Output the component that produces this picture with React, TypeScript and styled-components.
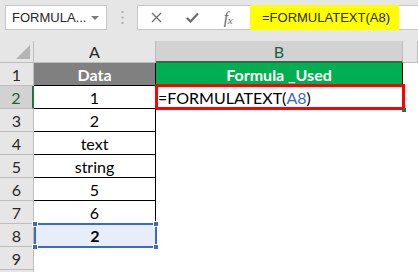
import * as React from 'react'
import styled, { createGlobalStyle, css } from 'styled-components'

const GlobalStyle = createGlobalStyle`
  body {
    margin: 0;
    background: #fff;
  }
  * {
    box-sizing: border-box;
  }
`

const Page = styled.div`
  width: 418px;
  height: 272px;
  overflow: hidden;
  background: #fff;
  font-family: Lato, "Liberation Sans", sans-serif;
`

const Toolbar = styled.div`
  height: 41px;
  background: #e6e6e6;
  display: flex;
  align-items: flex-start;
  padding: 5px 0 0 5px;
  font-family: "Liberation Sans", Arial, sans-serif;
`

const NameBox = styled.div`
  width: 102px;
  height: 25px;
  background: #fff;
  border: 1px solid #c6c6c6;
  display: flex;
  align-items: center;
  padding: 0 7px 0 6px;
  font-size: 13px;
  color: #262626;
`

const Caret = styled.span`
  margin-left: auto;
  width: 0;
  height: 0;
  border-left: 4px solid transparent;
  border-right: 4px solid transparent;
  border-top: 4px solid #7a7a7a;
`

const Splitter = styled.div`
  width: 30px;
  height: 25px;
  display: flex;
  align-items: center;
  justify-content: center;
`

const FormulaBox = styled.div`
  flex: 1;
  height: 25px;
  background: #fff;
  border: 1px solid #c6c6c6;
  border-right: none;
  display: flex;
  align-items: center;
`

const IconButton = styled.div`
  width: 36px;
  height: 100%;
  display: flex;
  align-items: center;
  justify-content: center;
  color: #6a6a6a;
`

const FxLabel = styled.span`
  font-family: "Liberation Serif", serif;
  font-style: italic;
  font-size: 16px;
  color: #6a6a6a;
  letter-spacing: -0.5px;

  sub {
    font-size: 11px;
    vertical-align: -1px;
  }
`

const FormulaText = styled.div`
  margin-left: 4px;
  width: 149px;
  height: 25px;
  margin-top: -1px;
  background: #ffff00;
  display: flex;
  align-items: center;
  padding-left: 12px;
  font-size: 13px;
  color: #262626;
`

const Sheet = styled.div`
  display: grid;
  grid-template-columns: 34px 122px 247px 1fr;
  grid-template-rows: 22px repeat(10, 23px);
`

const Corner = styled.div`
  background: #e6e6e6;
  border-right: 1px solid #bdbdbd;
  border-bottom: 1px solid #bdbdbd;
  display: flex;
  align-items: flex-end;
  justify-content: flex-end;
  padding: 0 3px 3px 0;
`

const ColHeader = styled.div<{ $active?: boolean }>`
  background: #e6e6e6;
  border-right: 1px solid #bdbdbd;
  border-bottom: 1px solid #bdbdbd;
  display: flex;
  align-items: center;
  justify-content: center;
  font-size: 16px;
  color: #262626;
  ${p => p.$active && css`
    background: #d2d2d2;
    border-bottom: 2px solid #217346;
    color: #1d5f3b;
  `}
`

const RowHeader = styled.div<{ $active?: boolean }>`
  background: #e6e6e6;
  border-right: 1px solid #bdbdbd;
  border-bottom: 1px solid #bdbdbd;
  display: flex;
  align-items: center;
  justify-content: center;
  font-size: 16px;
  color: #262626;
  ${p => p.$active && css`
    background: #d2d2d2;
    border-right: 2px solid #217346;
    color: #1d5f3b;
  `}
`

const Cell = styled.div<{ $fill?: string; $bold?: boolean; $boxed?: boolean; $align?: string }>`
  position: relative;
  display: flex;
  align-items: center;
  justify-content: ${p => p.$align || 'center'};
  font-size: 16px;
  color: ${p => (p.$fill ? '#fff' : '#000')};
  background: ${p => p.$fill || '#fff'};
  font-weight: ${p => (p.$bold ? 700 : 400)};
  ${p => p.$boxed && css`
    border-right: 1px solid #000;
    border-bottom: 1px solid #000;
  `}
`

const Blank = styled.div``

const ActiveFrame = styled.div`
  position: absolute;
  left: -1px;
  top: -2px;
  right: -2px;
  bottom: -1px;
  border: 3px solid #ff0000;
  pointer-events: none;
`

const FillHandle = styled.div`
  position: absolute;
  right: -3px;
  bottom: -3px;
  width: 4px;
  height: 4px;
  background: #217346;
`

const RefFrame = styled.div`
  position: absolute;
  left: 0;
  top: -1px;
  right: -1px;
  bottom: -1px;
  border: 2px solid #3a6cc6;
  pointer-events: none;
`

const Handle = styled.div<{ $x: 'left' | 'right'; $y: 'top' | 'bottom' }>`
  position: absolute;
  ${p => p.$x}: -4px;
  ${p => p.$y}: -4px;
  width: 6px;
  height: 6px;
  background: #3a6cc6;
  border: 1px solid #fff;
`

const RefText = styled.span`
  color: #3a6cc6;
`

const data = ['1', '2', 'text', 'string', '5', '6', '2']

export default function App() {
  return (
    <Page>
      <GlobalStyle />
      <Toolbar>
        <NameBox>
          FORMULA...
          <Caret />
        </NameBox>
        <Splitter>
          <svg width="3" height="13" viewBox="0 0 3 13">
            <rect x="0.5" y="0" width="2" height="2" fill="#b0b0b0" />
            <rect x="0.5" y="5.5" width="2" height="2" fill="#b0b0b0" />
            <rect x="0.5" y="11" width="2" height="2" fill="#b0b0b0" />
          </svg>
        </Splitter>
        <FormulaBox>
          <IconButton>
            <svg width="11" height="11" viewBox="0 0 11 11">
              <path d="M1 1 L10 10 M10 1 L1 10" stroke="#707070" strokeWidth="1.4" />
            </svg>
          </IconButton>
          <IconButton>
            <svg width="13" height="11" viewBox="0 0 13 11">
              <path d="M1 6 L4.5 9.5 L12 1.5" stroke="#6a6a6a" strokeWidth="2.2" fill="none" />
            </svg>
          </IconButton>
          <IconButton>
            <FxLabel>f<sub>x</sub></FxLabel>
          </IconButton>
          <FormulaText>=FORMULATEXT(A8)</FormulaText>
        </FormulaBox>
      </Toolbar>

      <Sheet>
        <Corner>
          <svg width="14" height="14" viewBox="0 0 14 14">
            <path d="M14 0 L14 14 L0 14 Z" fill="#b4b4b4" />
          </svg>
        </Corner>
        <ColHeader>A</ColHeader>
        <ColHeader $active>B</ColHeader>
        <ColHeader />

        <RowHeader>1</RowHeader>
        <Cell $boxed $fill="#808080" $bold>Data</Cell>
        <Cell $boxed $fill="#00b050" $bold>Formula _Used</Cell>
        <Blank />

        {data.map((v, i) => {
          const row = i + 2
          const isRef = row === 8
          return (
            <React.Fragment key={row}>
              <RowHeader $active={row === 2}>{row}</RowHeader>
              <Cell
                $boxed={!isRef}
                $bold={isRef}
                $fill={isRef ? '#e8eef9' : undefined}
                style={isRef ? { color: '#000' } : undefined}
              >
                {v}
                {isRef && (
                  <RefFrame>
                    <Handle $x="left" $y="top" />
                    <Handle $x="right" $y="top" />
                    <Handle $x="left" $y="bottom" />
                    <Handle $x="right" $y="bottom" />
                  </RefFrame>
                )}
              </Cell>
              {row === 2 ? (
                <Cell $align="flex-start" style={{ paddingLeft: 2 }}>
                  =FORMULATEXT(<RefText>A8</RefText>)
                  <ActiveFrame />
                  <FillHandle />
                </Cell>
              ) : (
                <Blank />
              )}
              <Blank />
            </React.Fragment>
          )
        })}

        <RowHeader>9</RowHeader>
        <Blank />
        <Blank />
        <Blank />
        <RowHeader />
      </Sheet>
    </Page>
  )
}
